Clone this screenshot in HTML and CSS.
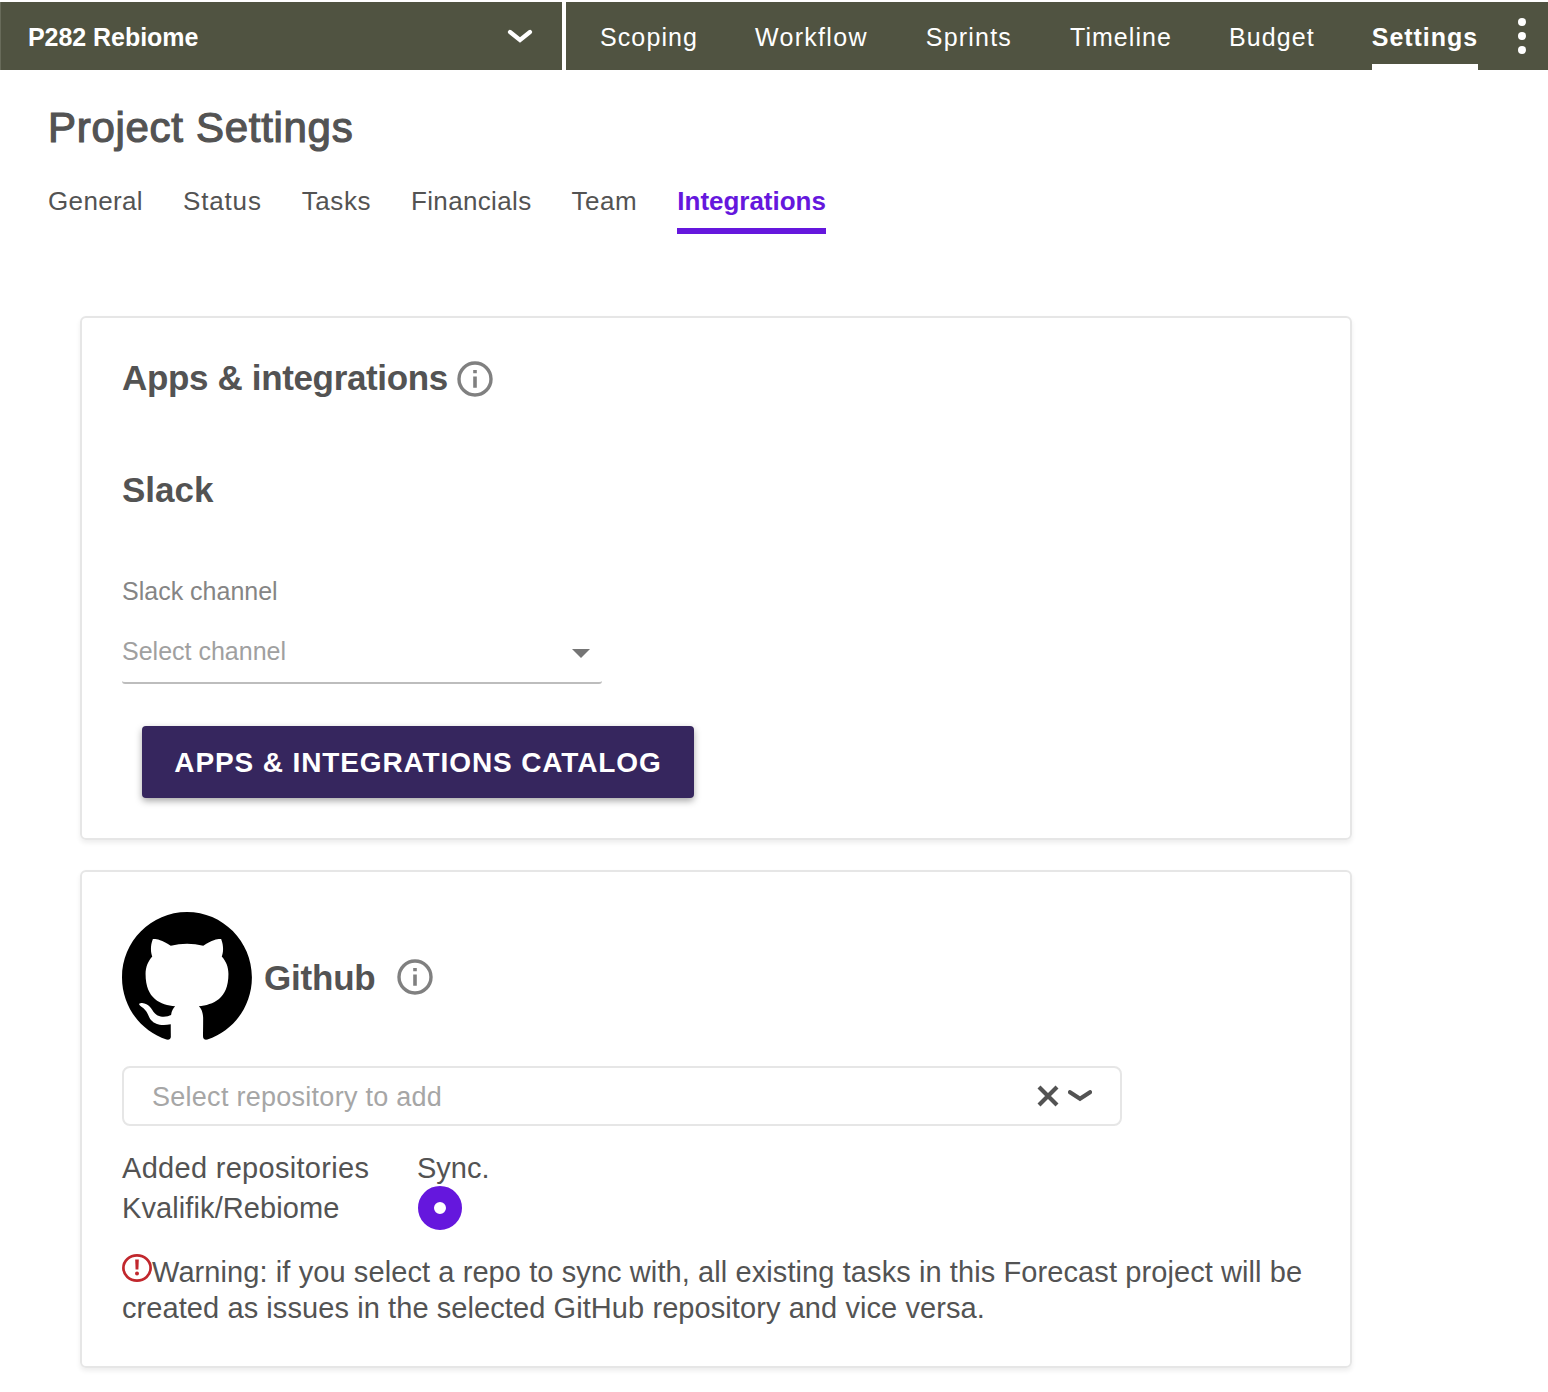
FILE: index.html
```html
<!DOCTYPE html>
<html lang="en">
<head>
<meta charset="utf-8">
<title>Project Settings</title>
<link rel="stylesheet" href="styles.css">
</head>
<body>
<header class="topbar">
  <div class="project">
    <span class="project-name">P282 Rebiome</span>
    <svg class="project-chevron" width="26" height="14" viewBox="0 0 26 14"><path d="M3 3l10 8L23 3" fill="none" stroke="#fff" stroke-width="4.2" stroke-linecap="round"/></svg>
  </div>
  <nav class="nav">
    <a class="nav-item scoping">Scoping</a>
    <a class="nav-item workflow">Workflow</a>
    <a class="nav-item sprints">Sprints</a>
    <a class="nav-item timeline">Timeline</a>
    <a class="nav-item budget">Budget</a>
    <a class="nav-item active">Settings</a>
    <svg class="more" width="8" height="36" viewBox="0 0 8 36" fill="#fff"><circle cx="4" cy="4" r="4"/><circle cx="4" cy="18" r="4"/><circle cx="4" cy="32" r="4"/></svg>
  </nav>
</header>

<main>
  <h1 class="title">Project Settings</h1>
  <nav class="tabs">
    <a class="tab general">General</a>
    <a class="tab status">Status</a>
    <a class="tab tasks">Tasks</a>
    <a class="tab financials">Financials</a>
    <a class="tab team">Team</a>
    <a class="tab selected">Integrations</a>
  </nav>

  <section class="card">
    <div class="card-head">
      <h2 class="heading apps">Apps &amp; integrations</h2>
      <svg class="info" width="36" height="36" viewBox="0 0 36 36"><circle cx="18" cy="18" r="16" fill="none" stroke="#808080" stroke-width="3.4"/><path d="M16.2 9h3.6v3.3h-3.6zM16.2 15.5h3.6v11.3h-3.6z" fill="#808080"/></svg>
    </div>
    <h2 class="heading slack">Slack</h2>
    <div class="label">Slack channel</div>
    <div class="channel">
      <span>Select channel</span>
      <svg width="18" height="9" viewBox="0 0 18 9"><path d="M0 0h18L9 9z" fill="#757575"/></svg>
    </div>
    <button class="catalog">APPS &amp; INTEGRATIONS CATALOG</button>
  </section>

  <section class="card">
    <div class="github">
      <svg width="130" height="128" viewBox="0 0 97.7 96.2"><path d="M48.854 0C21.839 0 0 22 0 49.217c0 21.756 13.993 40.172 33.405 46.69 2.427.49 3.316-1.059 3.316-2.362 0-1.141-.08-5.052-.08-9.127-13.59 2.934-16.42-5.867-16.42-5.867-2.184-5.704-5.42-7.17-5.42-7.17-4.448-3.015.324-3.015.324-3.015 4.934.326 7.523 5.052 7.523 5.052 4.367 7.496 11.404 5.378 14.235 4.074.404-3.178 1.699-5.378 3.074-6.6-10.839-1.141-22.243-5.378-22.243-24.283 0-5.378 1.94-9.778 5.014-13.2-.485-1.222-2.184-6.275.486-13.038 0 0 4.125-1.304 13.426 5.052a46.97 46.97 0 0 1 12.214-1.63c4.125 0 8.33.571 12.213 1.63 9.302-6.356 13.427-5.052 13.427-5.052 2.67 6.763.97 11.816.485 13.038 3.155 3.422 5.015 7.822 5.015 13.2 0 18.905-11.404 23.06-22.324 24.283 1.78 1.548 3.316 4.481 3.316 9.126 0 6.6-.08 11.897-.08 13.526 0 1.304.89 2.853 3.316 2.364 19.412-6.52 33.405-24.935 33.405-46.691C97.707 22 75.788 0 48.854 0z"/></svg>
      <h2 class="heading gh-name">Github</h2>
      <svg class="info" width="36" height="36" viewBox="0 0 36 36"><circle cx="18" cy="18" r="16" fill="none" stroke="#808080" stroke-width="3.4"/><path d="M16.2 9h3.6v3.3h-3.6zM16.2 15.5h3.6v11.3h-3.6z" fill="#808080"/></svg>
    </div>
    <div class="repo-select">
      <span class="placeholder">Select repository to add</span>
      <svg width="22" height="22" viewBox="0 0 22 22"><path d="M2 2l18 18M20 2L2 20" stroke="#535353" stroke-width="4.2"/></svg>
      <svg width="24" height="12" viewBox="0 0 24 12"><path d="M2 2.2l10 6.6 10-6.6" fill="none" stroke="#535353" stroke-width="4.2" stroke-linecap="round"/></svg>
    </div>
    <div class="repos">
      <span class="added">Added repositories</span><span>Sync.</span>
      <span class="repo">Kvalifik/Rebiome</span><span class="sync"></span>
    </div>
    <p class="warning"><svg width="30" height="28" viewBox="0 0 30 28"><ellipse cx="15" cy="14" rx="13.6" ry="12.6" fill="none" stroke="#c1272d" stroke-width="2.7"/><path d="M13.2 5.5h3.6l-.4 10h-2.8z" fill="#c1272d"/><circle cx="15" cy="19.5" r="2" fill="#c1272d"/></svg><span class="line1">Warning: if you select a repo to sync with, all existing tasks in this Forecast project will be</span><br><span class="line2">created as issues in the selected GitHub repository and vice versa.</span></p>
  </section>
</main>
</body>
</html>
```
FILE: styles.css
```css
* { box-sizing: border-box; }
body {
  margin: 0;
  padding-top: 2px;
  min-height: 1392px;
  background: #fff;
  color: #535353;
  font-family: "Liberation Sans", Arial, sans-serif;
  white-space: nowrap;
}
svg { display: block; flex: none; }
h1, h2, p { margin: 0; }

.topbar { display: flex; gap: 4px; height: 68px; color: #fff; }
.project {
  display: flex; flex: none; align-items: center; justify-content: space-between;
  width: 562px; padding: 0 29px 0 27px;
  background: #505341; border-left: 1px solid #686b5a;
}
.project-name { font-size: 25px; font-weight: 700; padding-top: 2px; letter-spacing: -.05px; }
.nav {
  display: flex; flex: 1; gap: 57px;
  padding: 0 22px 0 34px;
  background: #505341;
}
.nav-item { font-size: 25px; letter-spacing: 1.1px; line-height: 70px; height: 68px; }
.workflow { letter-spacing: 1.3px; margin-right: 1px; }
.sprints { letter-spacing: 1.2px; margin-right: 1px; }
.timeline { letter-spacing: 1.05px; }
.active { font-weight: 700; letter-spacing: .95px; border-bottom: 6px solid #fff; }
.nav .more { margin: 16px 0 0 auto; }
.nav .active { margin-right: -57px; }

.title {
  margin: 33px 0 0 48px;
  font-size: 42px; line-height: 50px; font-weight: 400; letter-spacing: .7px;
  -webkit-text-stroke: 1.2px #535353;
}
.tabs { display: flex; gap: 40px; margin: 29px 0 0 48px; height: 52px; }
.tab { font-size: 26px; line-height: 38px; letter-spacing: .35px; }
.status { letter-spacing: .85px; }
.tasks { letter-spacing: .55px; }
.team { letter-spacing: .55px; }
.selected {
  color: #6517dd; font-weight: 700; letter-spacing: -.02px;
  border-bottom: 6px solid #6517dd;
}

.card {
  width: 1272px; padding: 40px; margin: 30px 0 0 80px;
  border: 2px solid #e6e6e6; border-radius: 6px;
  box-shadow: 0 3px 5px rgba(0, 0, 0, .07);
}
.tabs + .card { margin-top: 82px; }
.heading { font-size: 35px; line-height: 40px; font-weight: 700; }
.card-head { display: flex; align-items: center; gap: 9px; height: 40px; }
.card-head .info { margin-top: 2px; }
.apps { letter-spacing: -.35px; }
.slack { margin-top: 72px; }
.label { margin-top: 66px; font-size: 25px; line-height: 30px; color: #858585; }
.channel {
  display: flex; align-items: center; justify-content: space-between;
  width: 480px; margin-top: 30px; padding: 0 12px 16px 0;
  border-bottom: 2px solid #bdbdbd; border-radius: 3px;
  font-size: 25px; line-height: 30px; color: #a0a0a0;
}
.channel svg { margin-top: 4px; }
.catalog {
  display: block; width: 552px; height: 72px; margin: 42px 0 0 20px; padding: 1px 0 0;
  border: 0; border-radius: 4px; background: #36265e; color: #fff;
  font: 700 28px/72px "Liberation Sans", Arial, sans-serif; letter-spacing: .88px;
  box-shadow: 0 3px 7px rgba(0, 0, 0, .35);
}

.github { display: flex; align-items: center; height: 128px; }
.gh-name { margin: 4px 21px 0 12px; letter-spacing: -.2px; }
.github .info { margin-top: 2px; }
.repo-select {
  display: flex; align-items: center; gap: 9px;
  width: 1000px; height: 60px; margin-top: 26px; padding: 0 28px;
  border: 2px solid #e6e6e6; border-radius: 8px;
}
.placeholder { flex: 1; font-size: 27px; letter-spacing: .27px; color: #a6a6a6; padding-top: 3px; }
.repos {
  display: grid; grid-template-columns: 295px 1fr; grid-template-rows: 40px 40px;
  margin-top: 22px; font-size: 29px; line-height: 40px;
}
.added { letter-spacing: .3px; }
.repo { letter-spacing: .1px; }
.sync {
  width: 44px; height: 44px; margin: -2px 0 0 1px; border-radius: 50%;
  border: 16px solid #6517dd; background: #fff;
}
.warning { margin-top: 26px; font-size: 29px; line-height: 36px; }
.warning svg { display: inline-block; vertical-align: 0; }
.line1 { letter-spacing: .09px; }
.line2 { letter-spacing: .08px; }
```
